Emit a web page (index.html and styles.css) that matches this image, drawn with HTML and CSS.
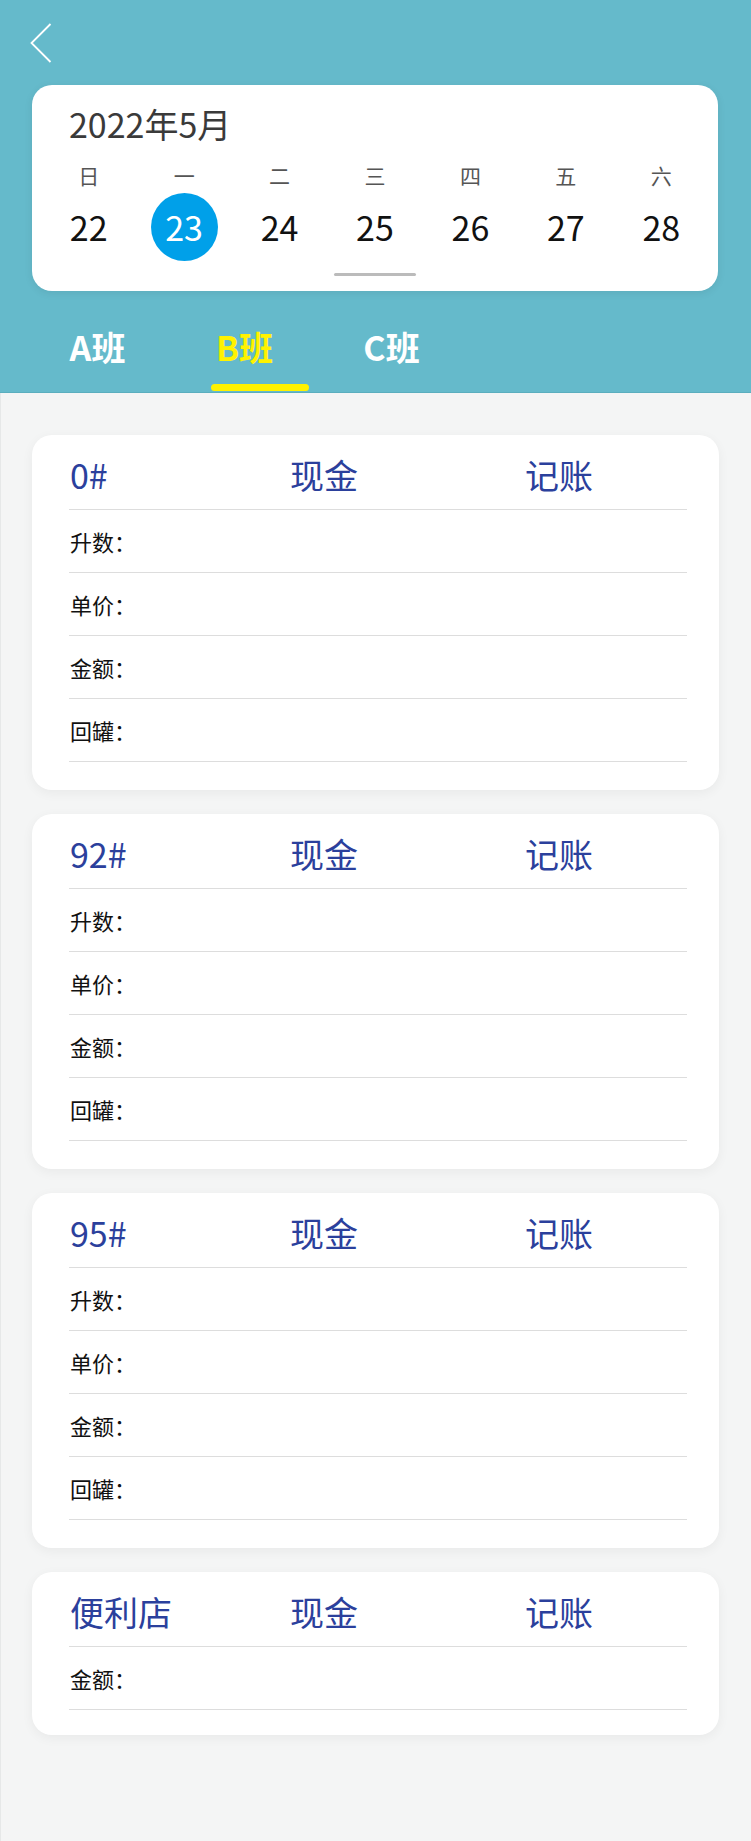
FILE: index.html
```html
<!DOCTYPE html>
<html lang="zh-CN">
  <head>
    <meta charset="UTF-8" />
    <meta name="viewport" content="width=device-width, initial-scale=1.0" />
    <title>班次报表</title>
    <link rel="stylesheet" href="styles.css">
  </head>
  <body>
    <div class="header">
      <div class="back">
        <svg width="22" height="40" viewBox="0 0 22 40">
          <path d="M20.5 1 L1.5 20 L20.5 39" fill="none" stroke="#fff" stroke-width="1.8" />
        </svg>
      </div>

      <div class="calendar">
        <div class="month">2022年5月</div>
        <div class="week">
          <span>日</span><span>一</span><span>二</span><span>三</span><span>四</span><span>五</span><span>六</span>
        </div>
        <div class="days">
          <span>22</span><span class="active">23</span><span>24</span><span>25</span><span>26</span><span>27</span><span>28</span>
        </div>
        <div class="bar"></div>
      </div>

      <div class="tabs">
        <div class="tab">A班</div>
        <div class="tab current">B班</div>
        <div class="tab">C班</div>
      </div>
    </div>

    <div class="list">
      <div class="card">
        <div class="card-head"><span>0#</span><span>现金</span><span>记账</span></div>
        <div class="row">升数：</div>
        <div class="row">单价：</div>
        <div class="row">金额：</div>
        <div class="row">回罐：</div>
      </div>

      <div class="card">
        <div class="card-head"><span>92#</span><span>现金</span><span>记账</span></div>
        <div class="row">升数：</div>
        <div class="row">单价：</div>
        <div class="row">金额：</div>
        <div class="row">回罐：</div>
      </div>

      <div class="card">
        <div class="card-head"><span>95#</span><span>现金</span><span>记账</span></div>
        <div class="row">升数：</div>
        <div class="row">单价：</div>
        <div class="row">金额：</div>
        <div class="row">回罐：</div>
      </div>

      <div class="card short">
        <div class="card-head"><span>便利店</span><span>现金</span><span>记账</span></div>
        <div class="row">金额：</div>
      </div>
    </div>
  </body>
</html>
```

FILE: styles.css
```css
/* General Styles */
body {
  margin: 0;
  padding: 0;
  min-height: 1841px;
  background-color: #f4f5f5;
  box-shadow: inset 1px 0 #e6e8e8;
  font-family: "Noto Sans CJK SC", "Noto Sans", sans-serif;
}

/* Header */
.header {
  background-color: #65bacb;
  height: 393px;
  padding-top: 24px;
  box-sizing: border-box;
  border-bottom: 1px solid #5aaebe;
}

.back {
  height: 38px;
  padding-left: 30px;
}

.back svg {
  display: block;
  margin-top: -1px;
}

/* Calendar */
.calendar {
  margin: 24px 33px 0 32px;
  height: 206px;
  box-sizing: border-box;
  padding: 19px 9px 0 9px;
  background-color: white;
  border-radius: 20px;
  box-shadow: 0 2px 8px rgba(0, 0, 0, 0.08);
}

.month {
  padding-left: 28px;
  font-size: 34px;
  line-height: 40px;
  color: #3a3a3a;
}

.week,
.days {
  display: grid;
  grid-template-columns: repeat(7, 1fr);
  justify-items: center;
}

.week {
  margin-top: 19px;
  font-size: 21px;
  line-height: 24px;
  color: #555;
}

.days {
  margin-top: 6px;
  font-size: 34px;
  color: #111;
}

.days span {
  width: 67px;
  height: 68px;
  line-height: 68px;
  text-align: center;
}

.days .active {
  background-color: #00a0e9;
  color: white;
  border-radius: 50%;
}

.bar {
  width: 82px;
  height: 3px;
  margin: 12px auto 0;
  background-color: #bbbbbb;
  border-radius: 2px;
}

/* Shift Tabs */
.tabs {
  display: flex;
  padding-left: 24px;
  margin-top: 36px;
}

.tab {
  position: relative;
  width: 147px;
  height: 64px;
  text-align: center;
  font-size: 34px;
  line-height: 40px;
  font-weight: bold;
  color: white;
}

.tab.current {
  color: #fff200;
}

.tab.current::after {
  content: "";
  position: absolute;
  left: 40px;
  bottom: 0;
  width: 98px;
  height: 7px;
  border-radius: 4px;
  background-color: #fff200;
}

/* Cards */
.list {
  display: flex;
  flex-direction: column;
  gap: 24px;
  padding: 42px 32px 0 32px;
}

.card {
  background-color: white;
  border-radius: 20px;
  padding: 0 32px 28px 37px;
  box-shadow: 0 3px 12px rgba(0, 0, 0, 0.05);
}

.card.short {
  padding-bottom: 25px;
}

.card-head {
  display: grid;
  grid-template-columns: 220px 235px 1fr;
  padding: 20px 0 14px 1px;
  font-size: 34px;
  line-height: 40px;
  color: #2b409c;
  border-bottom: 1px solid #dddddd;
}

.row {
  display: flex;
  align-items: center;
  height: 62px;
  padding-left: 1px;
  font-size: 22px;
  color: #111;
  border-bottom: 1px solid #dddddd;
}
```
